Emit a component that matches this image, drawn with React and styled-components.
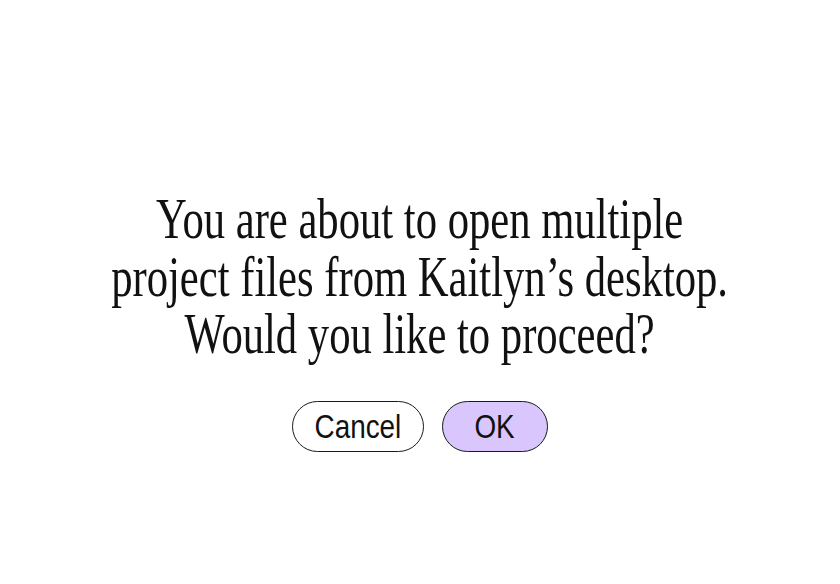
import React from "react";
import styled, { createGlobalStyle } from "styled-components";

const Global = createGlobalStyle`
  html, body {
    margin: 0;
    padding: 0;
    background: #ffffff;
  }
`;

const Page = styled.div`
  width: 840px;
  height: 584px;
  display: flex;
  flex-direction: column;
  align-items: center;
  padding-top: 190px;
  box-sizing: border-box;
`;

const Message = styled.h1`
  margin: 0;
  font-family: "Liberation Serif", "Times New Roman", serif;
  font-weight: 400;
  font-size: 58px;
  color: #111111;
  text-align: center;
  white-space: nowrap;
  transform: scaleX(0.735);
  transform-origin: center;
`;

const Line = styled.span`
  display: block;
  height: 57.5px;
  line-height: 57.5px;
`;

const Actions = styled.div`
  display: flex;
  gap: 18px;
  margin-top: 38px;
`;

const Button = styled.button`
  height: 51px;
  width: ${p => p.w}px;
  border: 1px solid #1a1a1a;
  border-radius: 26px;
  background: ${p => (p.primary ? "#d8c6fc" : "#ffffff")};
  color: #111111;
  font-family: "Liberation Sans", Arial, sans-serif;
  font-size: 34px;
  padding: 0;
  display: flex;
  align-items: center;
  justify-content: center;
`;

const Label = styled.span`
  display: inline-block;
  transform: scaleX(0.82);
`;

export default function App() {
  return (
    <>
      <Global />
      <Page>
        <Message>
          <Line>You are about to open multiple</Line>
          <Line>project files from Kaitlyn’s desktop.</Line>
          <Line>Would you like to proceed?</Line>
        </Message>
        <Actions>
          <Button w={132}>
            <Label>Cancel</Label>
          </Button>
          <Button w={106} primary>
            <Label>OK</Label>
          </Button>
        </Actions>
      </Page>
    </>
  );
}
